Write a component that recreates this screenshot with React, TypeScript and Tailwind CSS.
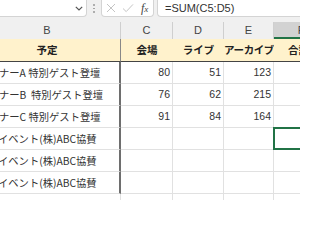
import React from "react";

const rows = [
  { label: "ナーA 特別ゲスト登壇", c: 80, d: 51, e: 123 },
  { label: "ナーB\u00a0 特別ゲスト登壇", c: 76, d: 62, e: 215 },
  { label: "ナーC 特別ゲスト登壇", c: 91, d: 84, e: 164 },
  { label: "イベント(株)ABC協賛" },
  { label: "イベント(株)ABC協賛" },
  { label: "イベント(株)ABC協賛" },
];

function FormulaBar() {
  return (
    <div className="flex h-[22px] items-start bg-[#f0f0f0]">
      <div className="flex h-[17px] w-[87px] shrink-0 items-center justify-end rounded-br-[4px] border-r border-b border-[#d4d4d4] bg-white pr-[3px]">
        <svg width="8" height="5" viewBox="0 0 8 5" fill="none">
          <path d="M0.8 0.8 L4 4 L7.2 0.8" stroke="#555" strokeWidth="1.2" />
        </svg>
      </div>
      <div className="flex h-[17px] w-[14px] shrink-0 flex-col items-center justify-center gap-[2px]">
        <span className="h-[1.5px] w-[1.5px] rounded-full bg-[#999]" />
        <span className="h-[1.5px] w-[1.5px] rounded-full bg-[#999]" />
        <span className="h-[1.5px] w-[1.5px] rounded-full bg-[#999]" />
      </div>
      <div className="flex h-[17px] w-[53px] shrink-0 items-center rounded-b-[4px] border-r border-b border-l border-[#d4d4d4] bg-white pl-[4px]">
        <svg width="10" height="10" viewBox="0 0 10 10" fill="none">
          <path d="M1 1 L9 9 M9 1 L1 9" stroke="#bdbdbd" strokeWidth="0.9" />
        </svg>
        <svg width="12" height="10" viewBox="0 0 12 10" fill="none" className="ml-[6px]">
          <path d="M1 5.5 L4.2 8.6 L11 1.4" stroke="#bdbdbd" strokeWidth="0.9" />
        </svg>
        <span className="ml-[7px] font-['Liberation_Serif',serif] text-[12px] italic leading-none text-[#444]">
          f<span className="text-[9px]">x</span>
        </span>
      </div>
      <div className="ml-[3px] flex h-[17px] flex-1 items-center rounded-bl-[4px] border-b border-l border-[#d4d4d4] bg-white pl-[7px] font-['Liberation_Sans',sans-serif] text-[11px] text-[#333]">
        =SUM(C5:D5)
      </div>
    </div>
  );
}

export default function App() {
  return (
    <div className="h-[200px] w-[300px] overflow-hidden bg-white font-['Noto_Sans_CJK_JP','Noto_Sans',sans-serif]">
      <FormulaBar />
      {/* sheet scrolled so column B starts off-screen */}
      <div className="-ml-[26px] grid w-[354px] grid-cols-[147px_52px_51px_50px_54px]">
        {/* column letters */}
        <div className="flex h-[17px] items-center justify-center border-r border-[#cfcfcf] bg-[#f0f0f0] font-['Liberation_Sans',sans-serif] text-[11px] text-[#444]">B</div>
        <div className="flex h-[17px] items-center justify-center border-r border-[#cfcfcf] bg-[#f0f0f0] font-['Liberation_Sans',sans-serif] text-[11px] text-[#444]">C</div>
        <div className="flex h-[17px] items-center justify-center border-r border-[#cfcfcf] bg-[#f0f0f0] font-['Liberation_Sans',sans-serif] text-[11px] text-[#444]">D</div>
        <div className="flex h-[17px] items-center justify-center border-r border-[#cfcfcf] bg-[#f0f0f0] font-['Liberation_Sans',sans-serif] text-[11px] text-[#444]">E</div>
        <div className="flex h-[17px] items-center justify-center border-b-2 border-[#217346] bg-[#d2d2d2] pt-[2px] font-['Liberation_Sans',sans-serif] text-[11px] text-[#444]">F</div>

        {/* header row */}
        <div className="flex h-[23px] items-center justify-center border-r border-b border-r-[#888] border-b-[#444] bg-[#fff2cc] text-[10.5px] font-bold text-[#222]">予定</div>
        <div className="flex h-[23px] items-center justify-center border-b border-[#444] bg-[#fff2cc] text-[10.5px] font-bold text-[#222]">会場</div>
        <div className="flex h-[23px] items-center justify-center border-b border-[#444] bg-[#fff2cc] text-[10.5px] font-bold text-[#222]">ライブ</div>
        <div className="flex h-[23px] items-center justify-center border-b border-[#444] bg-[#fff2cc] text-[10.5px] font-bold tracking-[-0.4px] text-[#222]">アーカイブ</div>
        <div className="flex h-[23px] items-center border-b border-[#444] bg-[#fff2cc] pl-[14px] text-[10.5px] font-bold text-[#222]">合計</div>

        {/* data rows */}
        {rows.map((row, i) => (
          <React.Fragment key={i}>
            <div className="flex h-[22px] items-center overflow-hidden border-r-2 border-b border-r-[#6e6e6e] border-b-[#e1e1e1] text-[10.3px] text-[#333]">
              <span className={`whitespace-nowrap ${row.c ? "ml-[25px]" : "ml-[24px]"}`}>{row.label}</span>
            </div>
            <div className="flex h-[22px] items-center justify-end border-r border-b border-[#e1e1e1] pr-[2px] font-['Liberation_Sans',sans-serif] text-[10.5px] text-[#333]">
              {row.c}
            </div>
            <div className="flex h-[22px] items-center justify-end border-r border-b border-[#e1e1e1] pr-[2px] font-['Liberation_Sans',sans-serif] text-[10.5px] text-[#333]">
              {row.d}
            </div>
            <div className="flex h-[22px] items-center justify-end border-r border-b border-[#e1e1e1] pr-[2px] font-['Liberation_Sans',sans-serif] text-[10.5px] text-[#333]">
              {row.e}
            </div>
            <div className="relative h-[22px] border-b border-[#e1e1e1]">
              {i === 3 && <div className="absolute inset-x-[-1px] top-[-1px] bottom-[-1px] border-2 border-[#217346]" />}
            </div>
          </React.Fragment>
        ))}

        {/* partial row below table */}
        <div className="h-[22px] border-r border-[#e1e1e1]" />
        <div className="h-[22px] border-r border-[#e1e1e1]" />
        <div className="h-[22px] border-r border-[#e1e1e1]" />
        <div className="h-[22px] border-r border-[#e1e1e1]" />
        <div className="h-[22px]" />
      </div>
    </div>
  );
}
